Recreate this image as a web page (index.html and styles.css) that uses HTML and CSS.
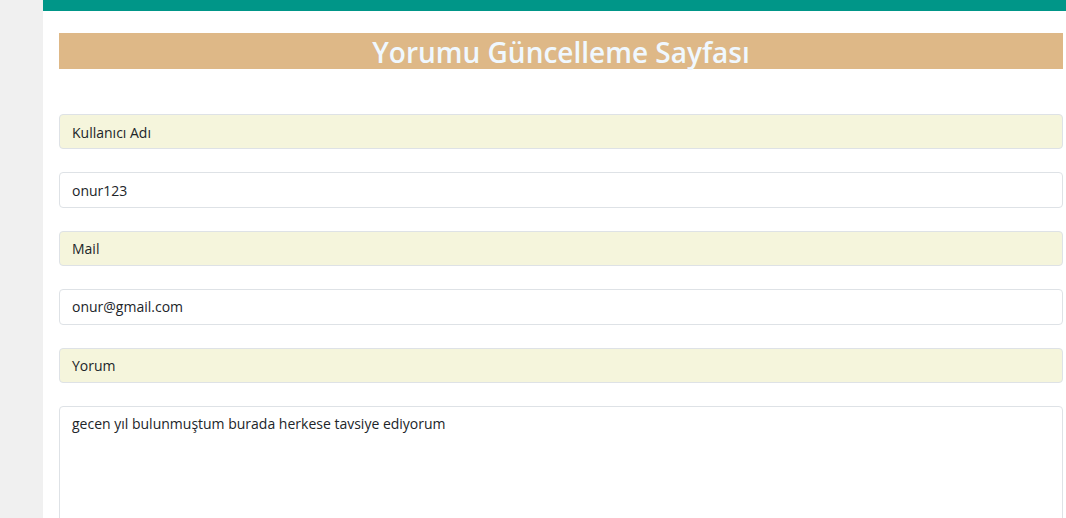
FILE: index.html
```html
<!DOCTYPE html>
<html lang="tr">
<head>
<meta charset="utf-8">
<title>Yorumu Güncelleme Sayfası</title>
<link rel="stylesheet" href="styles.css">
</head>
<body>
<div class="page">
  <aside class="side"></aside>
  <main class="main">
    <div class="topbar"></div>
    <div class="content">
      <h1 class="title">Yorumu Güncelleme Sayfası</h1>
      <form class="form">
        <div class="label-box">Kullanıcı Adı</div>
        <input class="field" type="text" value="onur123">
        <div class="label-box">Mail</div>
        <input class="field" type="text" value="onur@gmail.com">
        <div class="label-box">Yorum</div>
        <textarea class="field area">gecen yıl bulunmuştum burada herkese tavsiye ediyorum</textarea>
      </form>
    </div>
  </main>
</div>
</body>
</html>
```
FILE: styles.css
```css
* { box-sizing: border-box; }
html, body { margin: 0; padding: 0; height: 100%; overflow: hidden; }
body {
  font-family: "Open Sans", "Noto Sans", sans-serif;
  color: #212529;
  background: #fff;
}
.page { display: flex; height: 100%; }
.side { width: 43px; flex: none; background: #f0f0f0; }
.main { flex: 1; display: flex; flex-direction: column; overflow: hidden; }
.topbar { height: 11px; background: #009688; flex: none; }
.content { padding: 22px 3px 0 16px; }
.title {
  margin: 0;
  height: 36px;
  line-height: 38px;
  background: #deb887;
  color: #f0f8ff;
  text-align: center;
  font-size: 28px;
  font-weight: 600;
}
.form { display: flex; flex-direction: column; gap: 23px; margin-top: 45px; }
.label-box, .field {
  height: 35.4px;
  border: 1px solid #dee2e6;
  border-radius: 4px;
  padding: 0 12px;
  font-family: inherit;
  font-size: 14px;
  color: #212529;
  display: flex;
  align-items: center;
}
.label-box { background: #f5f5dc; padding-top: 1px; }
.field { background: #fff; width: 100%; outline: none; }
.area { height: 140px; flex: none; padding: 6px 12px; resize: none; line-height: 21px; display: block; }
```
